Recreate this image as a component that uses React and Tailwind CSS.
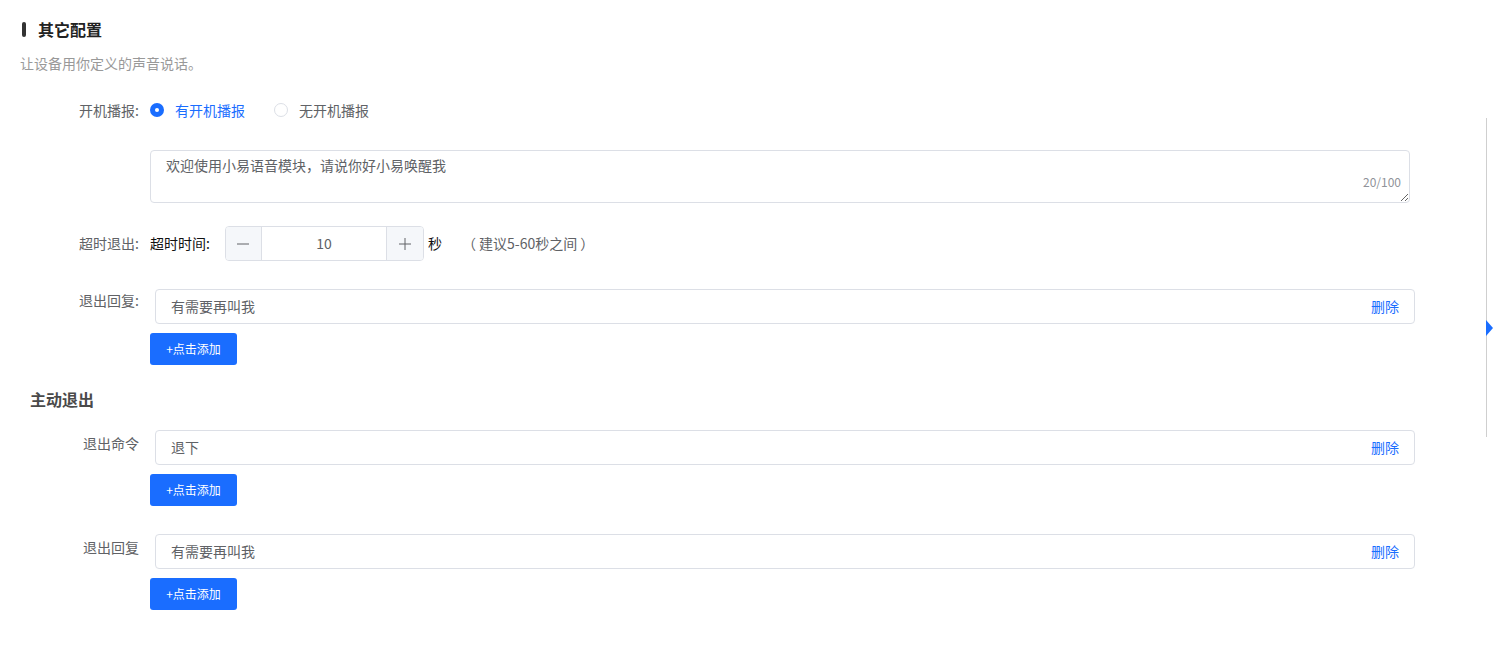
import { useState } from 'react'

const font = { fontFamily: '"Noto Sans CJK SC", "Noto Sans", sans-serif' }

function AddButton() {
  return (
    <button className="mt-[9px] ml-[150px] h-[32px] w-[87px] rounded-[3px] bg-[#1a6dff] text-[12px] text-white">
      +点击添加
    </button>
  )
}

function PhraseRow({ label, value, labelPad }) {
  return (
    <div className="flex items-start">
      <div className={`w-[139px] shrink-0 text-right text-[14px] leading-[20px] text-[#606266] ${labelPad}`}>
        {label}
      </div>
      <div className="ml-[16px] flex h-[35px] w-[1260px] items-center justify-between rounded-[4px] border border-[#dcdfe6] px-[15px]">
        <span className="text-[14px] text-[#606266]">{value}</span>
        <span className="text-[14px] text-[#1a6dff] cursor-pointer">删除</span>
      </div>
    </div>
  )
}

function Radio({ checked, label, onClick, className }) {
  return (
    <label className={`flex items-center cursor-pointer ${className}`} onClick={onClick}>
      <span className={`flex h-[14px] w-[14px] items-center justify-center rounded-full ${checked ? 'bg-[#1a6dff]' : 'border border-[#dcdfe6]'}`}>
        {checked && <span className="h-[4px] w-[4px] rounded-full bg-white" />}
      </span>
      <span className={`ml-[11px] text-[14px] ${checked ? 'text-[#1a6dff]' : 'text-[#606266]'}`}>{label}</span>
    </label>
  )
}

export default function App() {
  const [boot, setBoot] = useState('yes')
  const [timeout, setTimeoutVal] = useState(10)

  return (
    <div className="relative min-h-[648px] bg-white" style={font}>
      {/* section header */}
      <div className="pt-[17px] pl-[22px] flex items-center h-[41px]">
        <span className="h-[15px] w-[4px] rounded-[2px] bg-[#333]" />
        <span className="ml-[12px] text-[16px] font-bold leading-[24px] text-[#222]">其它配置</span>
      </div>
      <div className="mt-[12px] pl-[20px] text-[14px] leading-[20px] text-[#999]">让设备用你定义的声音说话。</div>

      {/* boot broadcast */}
      <div className="mt-[27px] flex items-center h-[20px]">
        <div className="w-[139px] text-right text-[14px] text-[#606266]">开机播报:</div>
        <Radio className="ml-[11px]" checked={boot === 'yes'} label="有开机播报" onClick={() => setBoot('yes')} />
        <Radio className="ml-[29px]" checked={boot === 'no'} label="无开机播报" onClick={() => setBoot('no')} />
      </div>

      <div className="relative mt-[30px] ml-[150px] w-[1260px]">
        <textarea
          defaultValue="欢迎使用小易语音模块，请说你好小易唤醒我"
          className="block h-[53px] w-full resize-y rounded-[4px] border border-[#dcdfe6] px-[15px] py-[3px] text-[14px] leading-[22px] text-[#606266] outline-none"
          style={font}
        />
        <span className="absolute right-[9px] bottom-[13px] text-[12px] leading-[16px] text-[#909399]">20/100</span>
      </div>

      {/* timeout */}
      <div className="mt-[23px] flex items-center h-[35px]">
        <div className="w-[139px] text-right text-[14px] text-[#606266]">超时退出:</div>
        <span className="ml-[11px] text-[14px] text-[#111]">超时时间:</span>
        <div className="ml-[15px] flex h-[35px] w-[199px] overflow-hidden rounded-[4px] border border-[#dcdfe6]">
          <button
            className="flex w-[36px] items-center justify-center border-r border-[#dcdfe6] bg-[#f5f7fa]"
            onClick={() => setTimeoutVal(v => Math.max(5, v - 1))}
          >
            <svg width="14" height="14" viewBox="0 0 14 14"><path d="M1 7h12" stroke="#606266" strokeWidth="1" /></svg>
          </button>
          <div className="flex flex-1 items-center justify-center text-[14px] text-[#606266]">{timeout}</div>
          <button
            className="flex w-[37px] items-center justify-center border-l border-[#dcdfe6] bg-[#f5f7fa]"
            onClick={() => setTimeoutVal(v => Math.min(60, v + 1))}
          >
            <svg width="14" height="14" viewBox="0 0 14 14"><path d="M1 7h12M7 1v12" stroke="#606266" strokeWidth="1" /></svg>
          </button>
        </div>
        <span className="ml-[4px] text-[14px] text-[#111]">秒</span>
        <span className="ml-[20px] text-[14px] text-[#606266]">（ 建议5-60秒之间 ）</span>
      </div>

      {/* exit reply */}
      <div className="mt-[28px]">
        <PhraseRow label="退出回复:" value="有需要再叫我" labelPad="pt-[1px]" />
        <AddButton />
      </div>

      <div className="mt-[22px] pl-[30px] text-[16px] font-bold leading-[24px] text-[#4a4a4a]">主动退出</div>

      <div className="mt-[19px]">
        <PhraseRow label="退出命令" value="退下" labelPad="pt-[3px]" />
        <AddButton />
      </div>

      <div className="mt-[28px]">
        <PhraseRow label="退出回复" value="有需要再叫我" labelPad="pt-[3px]" />
        <AddButton />
      </div>

      {/* side anchor rail */}
      <div className="absolute left-[1486px] top-[118px] h-[319px] w-[1px] bg-[#cfcfcf]" />
      <div className="absolute left-[1486px] top-[320px] h-0 w-0 border-y-[8px] border-l-[7px] border-y-transparent border-l-[#1a6dff]" />
    </div>
  )
}
